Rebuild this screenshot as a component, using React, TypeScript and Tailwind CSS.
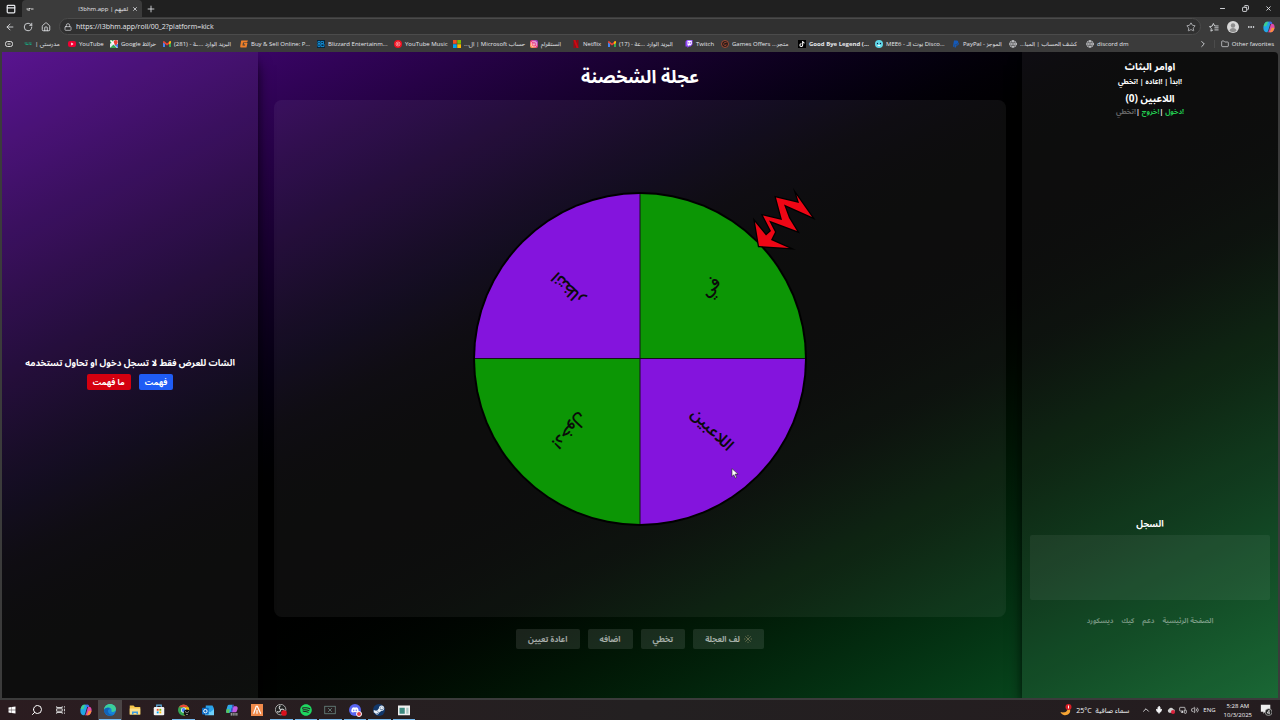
import React from 'react';
import {
  ArrowLeft, RotateCw, House, Lock, Star, Ellipsis, Globe, Folder, ChevronRight, ChevronUp,
  Minus, Copy, X, Plus, Search, Mic, Volume2, MonitorSmartphone, PanelTop,
} from 'lucide-react';
import { FaTiktok, FaPaypal, FaSpotify, FaDiscord, FaSteamSymbol, FaInstagram, FaWindows } from 'react-icons/fa';

type IconProps = { className?: string };

const YouTubeIcon = ({ className }: IconProps) => (
  <svg viewBox="0 0 16 16" className={className}>
    <rect x="0" y="2" width="16" height="12" rx="4" fill="#f00033" />
    <path d="M6.5 5.2v5.6L11 8z" fill="#fff" />
  </svg>
);

const YouTubeMusicIcon = ({ className }: IconProps) => (
  <svg viewBox="0 0 16 16" className={className}>
    <circle cx="8" cy="8" r="8" fill="#f01020" />
    <circle cx="8" cy="8" r="4" fill="none" stroke="#fff" strokeWidth="1" />
    <path d="M6.8 6v4L10 8z" fill="#fff" />
  </svg>
);

const MapsIcon = ({ className }: IconProps) => (
  <svg viewBox="0 0 16 16" className={className}>
    <rect width="16" height="16" rx="2" fill="#e8eaed" />
    <path d="M0 0h8L0 8z" fill="#34a853" />
    <path d="M0 16 8 8l8 8z" fill="#34a853" />
    <path d="M1 1l14 14" stroke="#fff" strokeWidth="3" />
    <path d="M8 9l8 7V8z" fill="#4285f4" />
    <path d="M11.5 0a4 4 0 0 0-4 4c0 3 4 7 4 7s4-4 4-7a4 4 0 0 0-4-4z" fill="#ea4335" />
  </svg>
);

const GmailIcon = ({ className }: IconProps) => (
  <svg viewBox="0 0 16 16" className={className}>
    <path d="M0 4v10h4V7z" fill="#4285f4" />
    <path d="M16 4v10h-4V7z" fill="#34a853" />
    <path d="M0 3l2-1 6 5 6-5 2 1v2l-8 6-8-6z" fill="#ea4335" />
    <path d="M14 2l2 1v3l-4 3V4z" fill="#fbbc04" />
  </svg>
);

const G2GIcon = ({ className }: IconProps) => (
  <svg viewBox="0 0 16 16" className={className}>
    <path d="M3 1h13l-2 4H6L5 11h5l.5-2H7l1-3h7l-2 9H3c-2 0-3-1-2.500-3L2 3c0-1 .5-2 1-2z" fill="#f0802a" />
  </svg>
);

const BlizzardIcon = ({ className }: IconProps) => (
  <svg viewBox="0 0 16 16" className={className}>
    <rect width="16" height="16" fill="#06263d" />
    <path d="M2 3h4v4H2zM2 8h4v5H2zM8 3h5v4H8zM8 8h6v5H8z" fill="none" stroke="#1596e0" strokeWidth="1.600" />
  </svg>
);

const MicrosoftIcon = ({ className }: IconProps) => (
  <svg viewBox="0 0 16 16" className={className}>
    <path d="M0 0h7.500v7.500H0z" fill="#f25022" />
    <path d="M8.500 0H16v7.500H8.500z" fill="#7fba00" />
    <path d="M0 8.500h7.500V16H0z" fill="#00a4ef" />
    <path d="M8.500 8.500H16V16H8.500z" fill="#ffb900" />
  </svg>
);

const InstagramIcon = ({ className }: IconProps) => (
  <span className={`${className} flex items-center justify-center rounded-xs bg-gradient-to-tr from-[#fdbb2d] via-[#f0307a] to-[#8a3ad8]`}>
    <FaInstagram className="size-1.5 text-white" />
  </span>
);

const NetflixIcon = ({ className }: IconProps) => (
  <svg viewBox="0 0 16 16" className={className}>
    <path d="M3 0h4v16H3zM9 0h4v16H9z" fill="#a00812" />
    <path d="M3 0h4l6 16H9z" fill="#d00812" />
  </svg>
);

const TwitchIcon = ({ className }: IconProps) => (
  <svg viewBox="0 0 16 16" className={className}>
    <path d="M4 0 1 3v10h4v3l3-3h3l4-4V0z" fill="#9146ff" />
    <path d="M5 1.500h8.500V8L11 10.500H8.500l-2 2v-2H5z" fill="#fff" />
    <path d="M7.500 4v3.500M11 4v3.500" stroke="#9146ff" strokeWidth="1.500" />
  </svg>
);

const GamesIcon = ({ className }: IconProps) => (
  <svg viewBox="0 0 16 16" className={className}>
    <circle cx="8" cy="8" r="7" fill="#261b19" stroke="#c4553a" strokeWidth="1.500" />
    <path d="M11 5H7L5 8l2 3h3V8" fill="none" stroke="#c4553a" strokeWidth="1.200" />
  </svg>
);

const TiktokIcon = ({ className }: IconProps) => (
  <span className={`${className} flex items-center justify-center bg-black`}>
    <FaTiktok className="size-1.5 text-white" />
  </span>
);

const Mee6Icon = ({ className }: IconProps) => (
  <svg viewBox="0 0 16 16" className={className}>
    <circle cx="8" cy="8" r="8" fill="#5fd6e6" />
    <circle cx="5" cy="7" r="1.300" fill="#114" />
    <circle cx="11" cy="7" r="1.300" fill="#114" />
    <path d="M4.500 10c2 3 5 3 7 0z" fill="#fff" />
  </svg>
);

const PaypalIcon = ({ className }: IconProps) => <FaPaypal className={`${className} text-[#1459b8]`} />;
const GlobeIcon = ({ className }: IconProps) => <Globe className={`${className} text-gray-200`} />;

const SchoolIcon = ({ className }: IconProps) => (
  <svg viewBox="0 0 16 16" className={className}>
    <path d="M1 6h6M3 9h6M9 6h6M11 9h4" stroke="#1c9c78" strokeWidth="2" />
  </svg>
);

const CopilotIcon = ({ className }: IconProps) => (
  <svg viewBox="0 0 16 16" className={className}>
    <path d="M5 1h5c1 0 1.500.6 1.800 1.600L12.300 4H9.500L7 12.500C6.600 14 6 15 4.500 15 3 15 .5 13 .5 9.500S2.500 1 5 1z" fill="#22a6e8" />
    <path d="M5 1c-2 0-3.500 3-4.200 6h3.700L6 3c.3-1 .8-2 2-2z" fill="#3ecf8e" />
    <path d="M11 15H6c1 0 1.700-1 2-2l2.300-8c.4-1 .9-1.500 1.700-1.500 2 0 3.500 1.500 3.500 4.500S13.500 15 11 15z" fill="#e04aa8" />
    <path d="M11 15c2 0 3.600-3 4.300-6h-3.800L10 13c-.3 1.200-1 2-2 2z" fill="#fb923c" />
    <path d="M8 1h2c1 0 1.500.6 1.800 1.600L12.300 4H9.500c-.8-.1-1.200-2-1.500-3z" fill="#4a63e6" />
  </svg>
);

const bookmarks = [
  { title: 'مدرستي |', rtl: true, width: 'w-11', icon: SchoolIcon },
  { title: 'YouTube', rtl: false, width: 'w-[42px]', icon: YouTubeIcon },
  { title: 'خرائط Google', rtl: true, width: 'w-[53px]', icon: MapsIcon },
  { title: 'البريد الوارد ...ـة - (281)', rtl: true, width: 'w-[77px]', icon: GmailIcon },
  { title: 'Buy & Sell Online: P...', rtl: false, width: 'w-[77px]', icon: G2GIcon },
  { title: 'Blizzard Entertainm...', rtl: false, width: 'w-[77px]', icon: BlizzardIcon },
  { title: 'YouTube Music', rtl: false, width: 'w-[59px]', icon: YouTubeMusicIcon },
  { title: 'حساب Microsoft | ال...', rtl: true, width: 'w-[77px]', icon: MicrosoftIcon },
  { title: 'انستقرام', rtl: true, width: 'w-[42px]', icon: InstagramIcon },
  { title: 'Netflix', rtl: false, width: 'w-9', icon: NetflixIcon },
  { title: 'البريد الوارد ...عة - (17)', rtl: true, width: 'w-[77px]', icon: GmailIcon },
  { title: 'Twitch', rtl: false, width: 'w-9', icon: TwitchIcon },
  { title: 'متجر... Games Offers', rtl: true, width: 'w-[77px]', icon: GamesIcon },
  { title: 'Good Bye Legend (...', rtl: false, bold: true, width: 'w-[77px]', icon: TiktokIcon },
  { title: 'MEE6 - بوت الـ Disco...', rtl: false, width: 'w-[77px]', icon: Mee6Icon },
  { title: 'الموجز - PayPal', rtl: true, width: 'w-[57px]', icon: PaypalIcon },
  { title: 'كشف الحساب | المبا...', rtl: true, width: 'w-[77px]', icon: GlobeIcon },
  { title: 'discord dm', rtl: false, width: 'w-[53px]', icon: GlobeIcon },
];

const BrowserChrome: React.FC = () => (
  <header className="bg-[#3b3b3b] text-gray-200">
    {/* Tab strip */}
    <div className="flex h-[17px] items-center bg-[#202020]">
      <button aria-label="Tab actions" className="flex w-[22px] justify-center">
        <PanelTop className="size-2.5" strokeWidth={3} />
      </button>
      <div className="flex h-full w-[120px] items-center rounded-t bg-[#3b3b3b] px-1">
        <svg viewBox="0 0 16 8" className="h-1 w-2">
          <path d="M1 4h3M5 3h4M10 4h5M3 6h5" stroke="#ddd" strokeWidth="2" />
        </svg>
        <span dir="rtl" className="ml-auto text-[6px] leading-none whitespace-nowrap">لعبهم | l3bhm.app</span>
        <button aria-label="Close tab" className="ml-1"><X className="size-1.5" strokeWidth={3} /></button>
      </div>
      <button aria-label="New tab" className="ml-1"><Plus className="size-2.5" strokeWidth={2} /></button>
      <div className="ml-auto flex items-center gap-4 pr-2">
        <button aria-label="Minimize"><Minus className="size-[7px]" strokeWidth={3} /></button>
        <button aria-label="Restore"><Copy className="size-[7px] -scale-x-100" strokeWidth={3} /></button>
        <button aria-label="Close"><X className="size-[7px]" strokeWidth={3} /></button>
      </div>
    </div>

    {/* Address bar */}
    <div className="flex h-[19px] items-center gap-2 px-[5px]">
      <button aria-label="Back"><ArrowLeft className="size-2.5" /></button>
      <button aria-label="Refresh"><RotateCw className="size-2.5" /></button>
      <button aria-label="Home"><House className="size-2.5" /></button>
      <div className="flex h-[17px] flex-1 items-center gap-1 rounded-full border border-[#4b4b4b] bg-[#303030] px-1">
        <Lock className="size-2" />
        <input
          aria-label="Address"
          readOnly
          value="https://l3bhm.app/roll/00_2?platform=kick"
          className="min-w-0 flex-1 bg-transparent text-[7px] leading-none outline-none"
        />
        <Star className="size-2.5" strokeWidth={1.5} />
      </div>
      <div className="flex items-center gap-2">
        <button aria-label="Favorites">
          <svg viewBox="0 0 24 24" className="size-2.5" fill="none" stroke="currentColor" strokeWidth="2" strokeLinecap="round" strokeLinejoin="round">
            <path d="M9 19.500 4.500 22l1-6.500L1 11l6.500-1 3-6.500 3 6H22M14 14h8M14 19h8" />
          </svg>
        </button>
        <button aria-label="Profile">
          <svg viewBox="0 0 12 12" className="size-3">
            <circle cx="6" cy="6" r="6" fill="#d8d8d8" />
            <circle cx="6" cy="4.500" r="2.200" fill="#8d8d8d" />
            <path d="M2.500 10c0-4 7-4 7 0-2 1.500-5 1.500-7 0z" fill="#8d8d8d" />
          </svg>
        </button>
        <button aria-label="Settings"><Ellipsis className="size-2" strokeWidth={3} /></button>
        <button aria-label="Copilot"><CopilotIcon className="size-3" /></button>
      </div>
    </div>

    {/* Bookmarks */}
    <nav className="flex h-4 items-center">
      <span className="flex w-6 shrink-0 pl-[5px]">
        <svg viewBox="0 0 16 12" className="h-1.5 w-2">
          <rect x="1" y="1" width="14" height="10" rx="4" fill="none" stroke="#ddd" strokeWidth="2" />
          <path d="M5 6h6" stroke="#ddd" strokeWidth="2" />
        </svg>
      </span>
      {bookmarks.map(({ title, rtl, bold, width, icon: Icon }) => (
        <a key={title} href="#" className={`flex shrink-0 items-center gap-[3px] ${width}`}>
          <Icon className="size-2 shrink-0" />
          <span
            dir={rtl ? 'rtl' : 'ltr'}
            className={`text-[6px] leading-none whitespace-nowrap ${bold ? 'font-bold' : ''}`}
          >
            {title}
          </span>
        </a>
      ))}
      <button aria-label="More favorites" className="ml-auto"><ChevronRight className="size-2.5" /></button>
      <a href="#" className="ml-1.5 flex items-center gap-[3px] border-l border-[#4b4b4b] pr-1.5 pl-1.5">
        <Folder className="size-2" />
        <span className="text-[6px] leading-none whitespace-nowrap">Other favorites</span>
      </a>
    </nav>
  </header>
);

const slices = [
  { label: 'في', angle: -45, color: '#0c9605', path: 'M0 0V-165A165 165 0 0 1 165 0z' },
  { label: 'اللاعبين', angle: 45, color: '#8414dd', path: 'M0 0H165A165 165 0 0 1 0 165z' },
  { label: '!دخول', angle: 135, color: '#0c9605', path: 'M0 0V165A165 165 0 0 1 -165 0z' },
  { label: 'انتظار', angle: 225, color: '#8414dd', path: 'M0 0H-165A165 165 0 0 1 0 -165z' },
];

const Wheel: React.FC = () => (
  <svg viewBox="-180 -180 360 360" className="size-[360px] overflow-visible">
    <circle r="167" fill="#000" />
    {slices.map(slice => (
      <g key={slice.label}>
        <path d={slice.path} fill={slice.color} />
        <text
          direction="rtl"
          textAnchor="middle"
          dominantBaseline="central"
          transform={`rotate(${slice.angle}) translate(101 -2)`}
          className="fill-[#0a0a0a] text-[16px] font-semibold"
        >
          {slice.label}
        </text>
      </g>
    ))}
    <path d="M-165 -.5H165M0 -165V165" stroke="#15101c" strokeWidth="1" />
    {/* Pointer */}
    <path
      d="M119 -113L115 -137L126 -123.500L131 -128L123 -143.500L142 -139L136 -161.500L159 -156L156.500 -164L172 -142L144 -154.500L149 -141L157 -128L129 -138.500L135 -127L131 -119L149 -111z"
      fill="#ee0615"
      stroke="#000"
      strokeWidth="2.500"
      strokeMiterlimit="8"
      style={{ paintOrder: 'stroke' }}
    />
  </svg>
);

const actions = ['تخطي', 'اضافه', 'اعادة تعيين'];

const RollPage: React.FC = () => (
  <div dir="rtl" className="mx-0.5 flex flex-1 overflow-hidden rounded-tr bg-gradient-to-br from-[#50088a] via-black to-[#0e602a] text-white">
    {/* Stream commands, players and log */}
    <aside className="flex w-64 shrink-0 flex-col items-center bg-white/5 px-2 pt-[7px] font-bold shadow-lg shadow-black">
      <h2 className="text-[10px] leading-[14px]">اوامر البثاث</h2>
      <p className="mt-1 text-[7px] leading-[10px]">!ابدأ | !اعاده | !تخطي</p>
      <h2 className="mt-1 text-[10px] leading-[14px]">اللاعبين (0)</h2>
      <p className="mt-0.5 text-[7px] leading-[10px]">
        <span className="text-[#22c94f]">!دخول</span> |<span className="text-[#22c94f]">!خروج</span> |<span className="text-[#666]">!تخطي</span>
      </p>
      <h3 className="mt-auto text-[9px] leading-[14px]">السجل</h3>
      <div className="mt-1 h-[65px] w-full rounded-xs bg-white/6"></div>
      <nav className="mt-4 mb-[72px] flex gap-2 text-[7px] leading-[10px] text-white/40">
        <a href="#">الصفحة الرئيسية</a>
        <a href="#">دعم</a>
        <a href="#">كيك</a>
        <a href="#">ديسكورد</a>
      </nav>
    </aside>

    <main className="flex min-w-0 flex-1 flex-col px-4">
      <h1 className="py-3 text-center text-[18px] leading-6 font-bold">عجلة الشخصنة</h1>
      <section className="flex flex-1 items-center justify-center rounded-lg bg-white/5">
        <Wheel />
      </section>
      <div className="mt-3 mb-[49px] flex justify-center gap-2 text-[8px] font-bold text-white/60">
        <button className="flex h-5 items-center gap-1 rounded-xs bg-white/10 px-3">
          <svg viewBox="0 0 12 12" className="size-2">
            <path d="M2 2l8 8M10 2l-8 8" stroke="#8a8a62" strokeWidth="1" />
            <path d="M6 0v2M6 10v2M0 6h2M10 6h2" stroke="#8a8a62" strokeWidth="1" />
          </svg>
          لف العجلة
        </button>
        {actions.map(action => (
          <button key={action} className="h-5 rounded-xs bg-white/10 px-3">{action}</button>
        ))}
      </div>
    </main>

    {/* Chat notice */}
    <aside className="flex w-64 shrink-0 flex-col items-center justify-center bg-white/5 pb-1 font-bold shadow-lg shadow-black">
      <p className="text-[9px] leading-[14px]">الشات للعرض فقط لا تسجل دخول او تحاول تستخدمه</p>
      <div className="mt-1 flex gap-2 text-[8px]">
        <button className="h-4 rounded-xs bg-[#1f5cf5] px-1.5">فهمت</button>
        <button className="h-4 rounded-xs bg-[#d4000f] px-1.5">ما فهمت</button>
      </div>
    </aside>
  </div>
);

const apps = [
  { name: 'Start', icon: <FaWindows className="size-2 text-white" /> },
  { name: 'Search', icon: <Search className="size-3 -scale-x-100 text-white" /> },
  {
    name: 'Task view',
    icon: (
      <svg viewBox="0 0 16 16" className="size-2.5" fill="none" stroke="#ddd" strokeWidth="1.500">
        <path d="M1 2v2h9V2M1 14v-2h9v2M1 6h9v4H1zM13.500 2v2M13.500 6v4M13.500 12v2" />
      </svg>
    ),
  },
  { name: 'Copilot', icon: <CopilotIcon className="size-3" /> },
  {
    name: 'Edge',
    active: true,
    icon: (
      <svg viewBox="0 0 16 16" className="size-3">
        <circle cx="8" cy="8" r="8" fill="#1683d8" />
        <path d="M0 8C0 3 4 0 8 0c5 0 8 3.500 8 6.500 0 3-2.500 4-4.500 4-1.500 0-2-.7-1.500-1.500C11 6 7 3.500 3.500 5 1.500 5.800.5 7 0 8z" fill="#3ccf9a" />
        <path d="M5.500 8c-1 4 3 7.500 7.500 6.200C7 18 0 14 0 8c1.500-3 6-4 8-1.500C7 6.500 6 7 5.500 8z" fill="#1263b8" />
      </svg>
    ),
  },
  {
    name: 'File Explorer',
    icon: (
      <svg viewBox="0 0 16 16" className="size-3">
        <path d="M1 2h5l2 2h7v10H1z" fill="#f6c64a" />
        <path d="M1 6h14v8H1z" fill="#fde08a" />
        <path d="M4 14v-4h8v4h-2v-2H6v2z" fill="#3e9be0" />
      </svg>
    ),
  },
  {
    name: 'Store',
    icon: (
      <svg viewBox="0 0 16 16" className="size-3">
        <path d="M5 4V1.500h6V4" fill="none" stroke="#5cb4e8" strokeWidth="1.500" />
        <rect x="1" y="4" width="14" height="11" rx="1.500" fill="#f2f2f2" />
        <path d="M5 6.500h2.500V9H5z" fill="#f25022" />
        <path d="M8.500 6.500H11V9H8.500z" fill="#7fba00" />
        <path d="M5 10h2.500v2.500H5z" fill="#00a4ef" />
        <path d="M8.500 10H11v2.500H8.500z" fill="#ffb900" />
      </svg>
    ),
  },
  {
    name: 'Chrome',
    open: true,
    icon: (
      <svg viewBox="0 0 16 16" className="size-3">
        <circle cx="7.500" cy="8" r="7.500" fill="#34a853" />
        <path d="M1 4.300A7.500 7.500 0 0 1 14 4.300z" fill="#ea4335" />
        <path d="M7.500 4.300H14A7.500 7.500 0 0 1 7.500 15.500L10.800 10z" fill="#fbbc04" />
        <circle cx="7.500" cy="8" r="3.500" fill="#fff" />
        <circle cx="7.500" cy="8" r="2.700" fill="#4285f4" />
        <circle cx="12" cy="11.500" r="4.300" fill="#111" />
        <path d="M9.500 10l2 1.500M14.500 10l-2 1.500M11 14h2" stroke="#ddd" strokeWidth="1" />
      </svg>
    ),
  },
  {
    name: 'Outlook',
    icon: (
      <svg viewBox="0 0 16 16" className="size-3">
        <path d="M5 2h9l2 4v8H5z" fill="#2aa2ea" />
        <path d="M5 7l6 4 5-4v8H4z" fill="#6fd0fa" />
        <rect x="0" y="5" width="9" height="9" rx="1" fill="#0f6cc4" />
        <circle cx="4.500" cy="9.500" r="2.300" fill="none" stroke="#fff" strokeWidth="1.300" />
      </svg>
    ),
  },
  {
    name: 'Microsoft 365',
    icon: (
      <svg viewBox="0 0 16 16" className="size-3">
        <path d="M4 1h5L6 12H2C-.5 12 0 9 1 6s1-5 3-5z" fill="#2fa8e8" />
        <path d="M1 7h4l-1 5H2c-2 0-2-3-1-5z" fill="#58c95a" />
        <path d="M10 3h3c3 0 3 3 2 5s-1 4-3 4H7z" fill="#c45be0" />
        <path d="M9 1h1.500L8 12H6z" fill="#4a5be0" />
        <path d="M5 11h11v5H5z" fill="#222" />
        <path d="M7 12v3.500M9.500 12v3.500M12 12v3.500M14.500 12v3.500" stroke="#eee" strokeWidth="1" />
      </svg>
    ),
  },
  {
    name: 'Ascent',
    icon: (
      <svg viewBox="0 0 16 16" className="size-3">
        <rect width="16" height="16" fill="#f08a4b" />
        <path d="M3.500 13L7 3h1.500l4.500 10M8 8v5" fill="none" stroke="#fff" strokeWidth="1.600" />
      </svg>
    ),
  },
  {
    name: 'OBS',
    open: true,
    icon: (
      <svg viewBox="0 0 16 16" className="size-3">
        <circle cx="7.500" cy="7.500" r="7" fill="#222" stroke="#ccc" strokeWidth="1" />
        <path d="M7.500 7.500C5 6 5 3 7.500 2.500M7.500 7.500c0 3-3 4-5 2.500M7.500 7.500c3-1.500 5 0 5 2.500" fill="none" stroke="#ccc" strokeWidth="1.500" />
        <circle cx="12" cy="12" r="3.800" fill="#d9101c" />
      </svg>
    ),
  },
  { name: 'Spotify', open: true, icon: <FaSpotify className="size-3 text-[#1ed760]" /> },
  {
    name: 'Capture',
    open: true,
    icon: (
      <svg viewBox="0 0 16 16" className="size-3" fill="none" stroke="#6f8f88" strokeWidth="1">
        <rect x="1" y="3" width="14" height="10" />
        <path d="M5.500 5.500l5 5M10.500 5.500l-5 5" />
      </svg>
    ),
  },
  {
    name: 'Discord',
    open: true,
    icon: (
      <span className="relative flex size-3 items-center justify-center rounded-full bg-[#5865f2]">
        <FaDiscord className="size-2 text-white" />
        <span className="absolute -right-px -bottom-px size-1.5 rounded-full border border-white bg-[#e0404a]"></span>
      </span>
    ),
  },
  {
    name: 'Steam',
    open: true,
    icon: (
      <span className="flex size-3 items-center justify-center rounded-full bg-[#12386b]">
        <FaSteamSymbol className="size-3 text-[#e8f0f8]" />
      </span>
    ),
  },
  {
    name: 'Task Manager',
    open: true,
    icon: (
      <svg viewBox="0 0 16 16" className="size-3">
        <rect x="0" y="2" width="16" height="13" fill="#f0f0f0" />
        <path d="M2 5h7v8H2z" fill="#3d8a80" />
        <path d="M11 5h3v8h-3z" fill="#a9c9c4" />
      </svg>
    ),
  },
];

const Taskbar: React.FC = () => (
  <footer className="flex h-5 items-center justify-between bg-gradient-to-r from-[#2b1c20] via-[#232021] to-[#241c1f] text-gray-100">
    <div className="flex h-full w-[416px]">
      {apps.map(app => (
        <button
          key={app.name}
          aria-label={app.name}
          className={`flex h-full flex-1 items-center justify-center px-px ${app.active ? 'bg-[#4b4546]' : ''}`}
        >
          <span className={`flex h-full w-full items-center justify-center border-b ${app.active || app.open ? 'border-[#76b9ed]' : 'border-transparent'}`}>
            {app.icon}
          </span>
        </button>
      ))}
    </div>
    <div className="flex items-center gap-1 pr-2 text-[7px] leading-none">
      <svg viewBox="0 0 12 12" className="size-3">
        <path d="M10 5.500C11 9 8 11.500 4.500 11.200 2.500 11 .8 9.500.5 8c3 1 7 .5 7.500-4z" fill="#f7a534" />
        <circle cx="8.500" cy="3" r="3" fill="#d81f26" />
        <path d="M8.500 1.500v3" stroke="#fff" strokeWidth="1" />
      </svg>
      <span>25°C</span>
      <span dir="rtl" className="mr-2">سماء صافية</span>
      <ChevronUp className="size-2.5" strokeWidth={2} />
      <Mic className="size-2" fill="currentColor" strokeWidth={3} />
      <svg viewBox="0 0 12 12" className="size-2">
        <path d="M3 10a3 3 0 0 1 0-5.500A3.500 3.500 0 0 1 9.500 5 2.500 2.500 0 0 1 9 10z" fill="#cfcfcf" />
        <circle cx="9" cy="9" r="3" fill="#d8213a" />
      </svg>
      <MonitorSmartphone className="size-2" />
      <Volume2 className="size-2" />
      <span className="text-[6px]">ENG</span>
      <div className="mx-1 flex flex-col items-center gap-[3px] text-[6px]">
        <span>5:28 AM</span>
        <span>10/3/2025</span>
      </div>
      <svg viewBox="0 0 14 14" className="size-3">
        <path d="M1 1h11v8H6l-2 2.500V9H1z" fill="#eee" />
        <circle cx="10" cy="9.500" r="4" fill="#222" stroke="#bbb" strokeWidth=".8" />
        <path d="M10.600 12V7.200L8.300 10.500h3.400" fill="none" stroke="#fff" strokeWidth=".8" />
      </svg>
    </div>
  </footer>
);

export default function App() {
  return (
    <div className="flex min-h-screen flex-col bg-[#3b3b3b] font-['Open_Sans','Noto_Sans_Arabic','DejaVu_Sans',sans-serif]">
      <BrowserChrome />
      <RollPage />
      <div className="h-0.5"></div>
      <Taskbar />
      {/* Mouse cursor */}
      <svg viewBox="0 0 12 18" className="pointer-events-none absolute top-[468px] left-[731px] h-[11px] w-2">
        <path d="M1 1v13l3-3 2.500 5.500 2-1L6.200 10H11z" fill="#fff" stroke="#222" strokeWidth="1" />
      </svg>
    </div>
  );
}
